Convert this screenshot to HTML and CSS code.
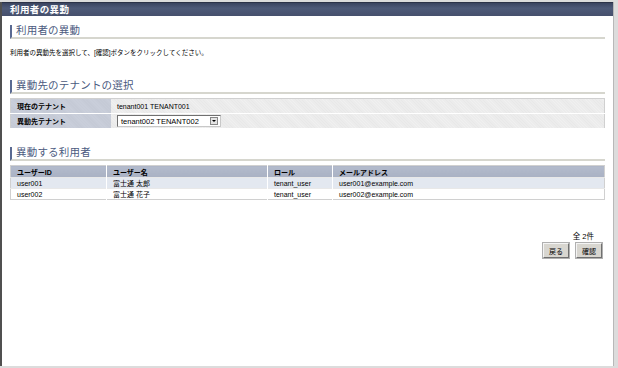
FILE: index.html
```html
<!DOCTYPE html>
<html lang="ja">
<head>
  <meta charset="UTF-8">
  <title>利用者の異動</title>
  <link rel="stylesheet" href="styles.css">
</head>
<body>
  <div class="frame">
    <div class="title-bar">利用者の異動</div>
    <div class="content">
      <h1 class="heading">利用者の異動</h1>
      <p class="desc">利用者の異動先を選択して、[確認]ボタンをクリックしてください。</p>

      <h2 class="heading sub">異動先のテナントの選択</h2>
      <table class="form-table">
        <tr>
          <th>現在のテナント</th>
          <td>tenant001 TENANT001</td>
        </tr>
        <tr>
          <th>異動先テナント</th>
          <td>
            <div class="select">
              <span>tenant002 TENANT002</span>
              <span class="arrow"></span>
            </div>
          </td>
        </tr>
      </table>

      <h2 class="heading sub">異動する利用者</h2>
      <table class="list-table">
        <tr>
          <th class="c-id">ユーザーID</th>
          <th class="c-name">ユーザー名</th>
          <th class="c-role">ロール</th>
          <th>メールアドレス</th>
        </tr>
        <tr class="odd">
          <td>user001</td>
          <td>富士通 太郎</td>
          <td>tenant_user</td>
          <td>user001@example.com</td>
        </tr>
        <tr>
          <td>user002</td>
          <td>富士通 花子</td>
          <td>tenant_user</td>
          <td>user002@example.com</td>
        </tr>
      </table>

      <div class="footer">
        <div class="count">全 2件</div>
        <div class="buttons">
          <button>戻る</button>
          <button>確認</button>
        </div>
      </div>
    </div>
  </div>
</body>
</html>
```

FILE: styles.css
```css
body {
  margin: 0;
  background: #dcdcdc;
  font-family: "Liberation Sans", "Noto Sans CJK JP", sans-serif;
  width: 618px;
  height: 368px;
  overflow: hidden;
}
.frame {
  width: 611px;
  height: 364px;
  margin-top: 2px;
  background: #fff;
  border-left: 2px solid #505050;
  border-right: 1px solid #b8b8b8;
}
.title-bar {
  height: 14px;
  line-height: 14px;
  padding-left: 8px;
  background: linear-gradient(#3a4460, #4e5a78 40%, #46506c);
  border-top: 1px solid #2c3348;
  box-sizing: border-box;
  color: #fff;
  font-size: 9.5px;
  font-weight: bold;
  letter-spacing: 0.4px;
}
.content {
  padding: 0 8px;
}
.heading {
  margin: 9px 0 0;
  padding: 0 0 1px 4px;
  border-left: 2px solid #5a6a92;
  border-bottom: 2px solid #d6d6ce;
  color: #4b5a80;
  font-size: 10.5px;
  font-weight: normal;
  line-height: 11px;
  letter-spacing: 0.2px;
}
.sub {
  margin-top: 0;
}
.desc {
  margin: 9px 0 22px;
  font-size: 6.5px;
  line-height: 10px;
  color: #000;
}
table {
  width: 100%;
  border-collapse: collapse;
  font-size: 7px;
}
.form-table {
  margin: 4px 0 18px;
  border: 1px solid #d0d0d0;
}
.form-table th {
  width: 94px;
  padding: 0 0 0 6px;
  height: 14px;
  text-align: left;
  font-weight: bold;
  background: repeating-linear-gradient(45deg, #c3c8d4 0 1px, #cbd0dc 1px 2px);
  border-bottom: 1px solid #fff;
}
.form-table td {
  padding: 0 6px;
  background: repeating-linear-gradient(45deg, #e8e8e8 0 1px, #f0f0f0 1px 2px);
  border-bottom: 1px solid #fff;
}
.select {
  display: flex;
  align-items: center;
  justify-content: space-between;
  width: 104px;
  height: 12px;
  box-sizing: border-box;
  padding: 0 2px 0 3px;
  background: #fff;
  border: 1px solid #707070;
  border-right-color: #c8c8c8;
  border-bottom-color: #c8c8c8;
  font-size: 7.5px;
}
.arrow {
  width: 8px;
  height: 8px;
  box-sizing: border-box;
  background: #e4e4e4;
  border: 1px solid #888;
  position: relative;
}
.arrow::after {
  content: "";
  position: absolute;
  left: 1px;
  top: 2px;
  border-left: 2px solid transparent;
  border-right: 2px solid transparent;
  border-top: 2px solid #000;
}
.list-table {
  margin-top: 4px;
  border: 1px solid #d0d0d0;
}
.list-table th {
  height: 11px;
  padding: 0 6px;
  text-align: left;
  font-weight: bold;
  background: linear-gradient(#b3bbcc, #a9b1c3);
  border-left: 1px solid #fff;
}
.list-table th:first-child,
.list-table td:first-child {
  border-left: none;
}
.list-table td {
  height: 10px;
  padding: 0 6px;
  border-left: 1px solid #fff;
  border-top: 1px solid #e8e8e8;
}
.list-table tr.odd td {
  background: #e3e8f0;
}
.c-id { width: 83px; }
.c-name { width: 148px; }
.c-role { width: 52px; }
.footer {
  display: flex;
  flex-direction: column;
  align-items: flex-end;
  margin-top: 32px;
  padding-right: 3px;
}
.count {
  font-size: 7.5px;
  margin-right: 8px;
  line-height: 10px;
}
.buttons {
  display: flex;
  gap: 7px;
  margin-top: 1px;
}
button {
  height: 15px;
  padding: 0 5px;
  font-family: inherit;
  font-size: 7px;
  background: #d8d6d0;
  border: 1px solid #f4f4f4;
  border-right-color: #707070;
  border-bottom-color: #707070;
  box-shadow: 0 0 0 1px #b0b0b0;
}
```
